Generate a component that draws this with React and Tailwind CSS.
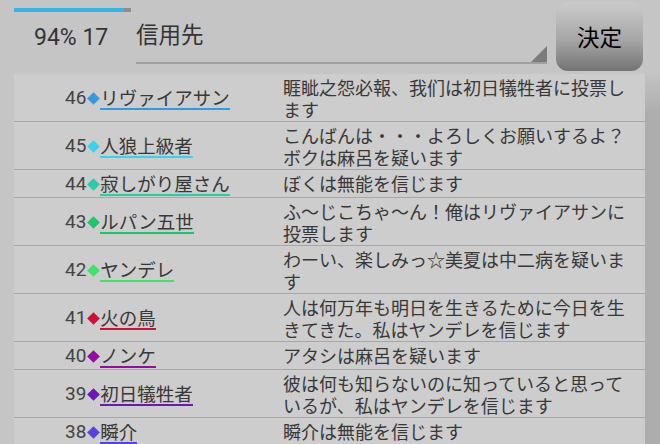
import React from 'react';

const rows = [
  { no: 46, name: 'リヴァイアサン', color: '#3399e0', msg: '睚眦之怨必報、我们は初日犠牲者に投票します' },
  { no: 45, name: '人狼上級者', color: '#36d4ec', msg: 'こんばんは・・・よろしくお願いするよ？ボクは麻呂を疑います' },
  { no: 44, name: '寂しがり屋さん', color: '#22cfa8', msg: 'ぼくは無能を信じます' },
  { no: 43, name: 'ルパン五世', color: '#1cc66a', msg: 'ふ〜じこちゃ〜ん！俺はリヴァイアサンに投票します' },
  { no: 42, name: 'ヤンデレ', color: '#3ce468', msg: 'わーい、楽しみっ☆美夏は中二病を疑います' },
  { no: 41, name: '火の鳥', color: '#d01036', msg: '人は何万年も明日を生きるために今日を生きてきた。私はヤンデレを信じます' },
  { no: 40, name: 'ノンケ', color: '#960ca2', msg: 'アタシは麻呂を疑います' },
  { no: 39, name: '初日犠牲者', color: '#6c16bc', msg: '彼は何も知らないのに知っていると思っているが、私はヤンデレを信じます' },
  { no: 38, name: '瞬介', color: '#5642e2', msg: '瞬介は無能を信じます' },
];

const jp = { fontFamily: '"Noto Sans CJK JP", sans-serif' };

const Row = ({ row }) => (
  <div className="flex border-b border-[#a7a7a7] pt-[2px] pb-[1px]">
    <div className="w-[269px] pl-[51px] flex items-center text-[#444]">
      <span className="text-[19px] leading-[22px]">{row.no}</span>
      <span className="w-[14px] flex justify-center">
        <span className="block w-[9px] h-[9px] rotate-45" style={{ backgroundColor: row.color }} />
      </span>
      <span
        className="text-[18.5px] leading-[22px] border-b-2 text-[#383838]"
        style={{ borderColor: row.color, ...jp }}
      >
        {row.name}
      </span>
    </div>
    <div className="w-[350px] text-[18px] leading-[22px] text-[#383838]" style={jp}>
      {row.msg}
    </div>
  </div>
);

const App = () => {
  return (
    <div
      className="w-[660px] h-[444px] overflow-hidden bg-[#c5c5c5] flex flex-col"
      style={{ fontFamily: 'Roboto, "Noto Sans CJK JP", sans-serif' }}
    >
      <div className="h-[74px] flex shrink-0">
        <div className="w-[136px] pl-[14px] pt-[8px]">
          <div className="flex h-[4px] w-[117px]">
            <div className="w-[110px] bg-[#33b5e5]" />
            <div className="flex-1 bg-[#8c8c8c]" />
          </div>
          <div className="mt-[13px] pl-[20px] text-[23px] leading-[26px] text-[#333]">94% 17</div>
        </div>
        <div
          className="relative w-[411px] h-[64px] border-b-2 border-[#a0a0a0] pt-[19px] text-[22.5px] leading-[28px] text-[#333]"
          style={jp}
        >
          信用先
          <svg className="absolute right-0 bottom-0" width="16" height="16" viewBox="0 0 16 16">
            <polygon points="16,0 16,16 0,16" fill="#7c7c7c" />
          </svg>
        </div>
        <div
          className="ml-[9px] mt-[2px] w-[87px] h-[69px] rounded-[12px] bg-[linear-gradient(#cbcbcb,#a6a6a6_55%,#737373)] flex items-center justify-center text-[22.5px] text-black"
          style={jp}
        >
          決定
        </div>
      </div>
      <div className="flex flex-1">
        <div className="w-[14px]" />
        <div className="w-[631px] bg-[#cdcdcd]">
          {rows.map((r) => (
            <Row key={r.no} row={r} />
          ))}
        </div>
        <div className="flex-1 bg-[linear-gradient(#c3c3c3,#adadad_40px)]" />
      </div>
    </div>
  );
};

export default App;
